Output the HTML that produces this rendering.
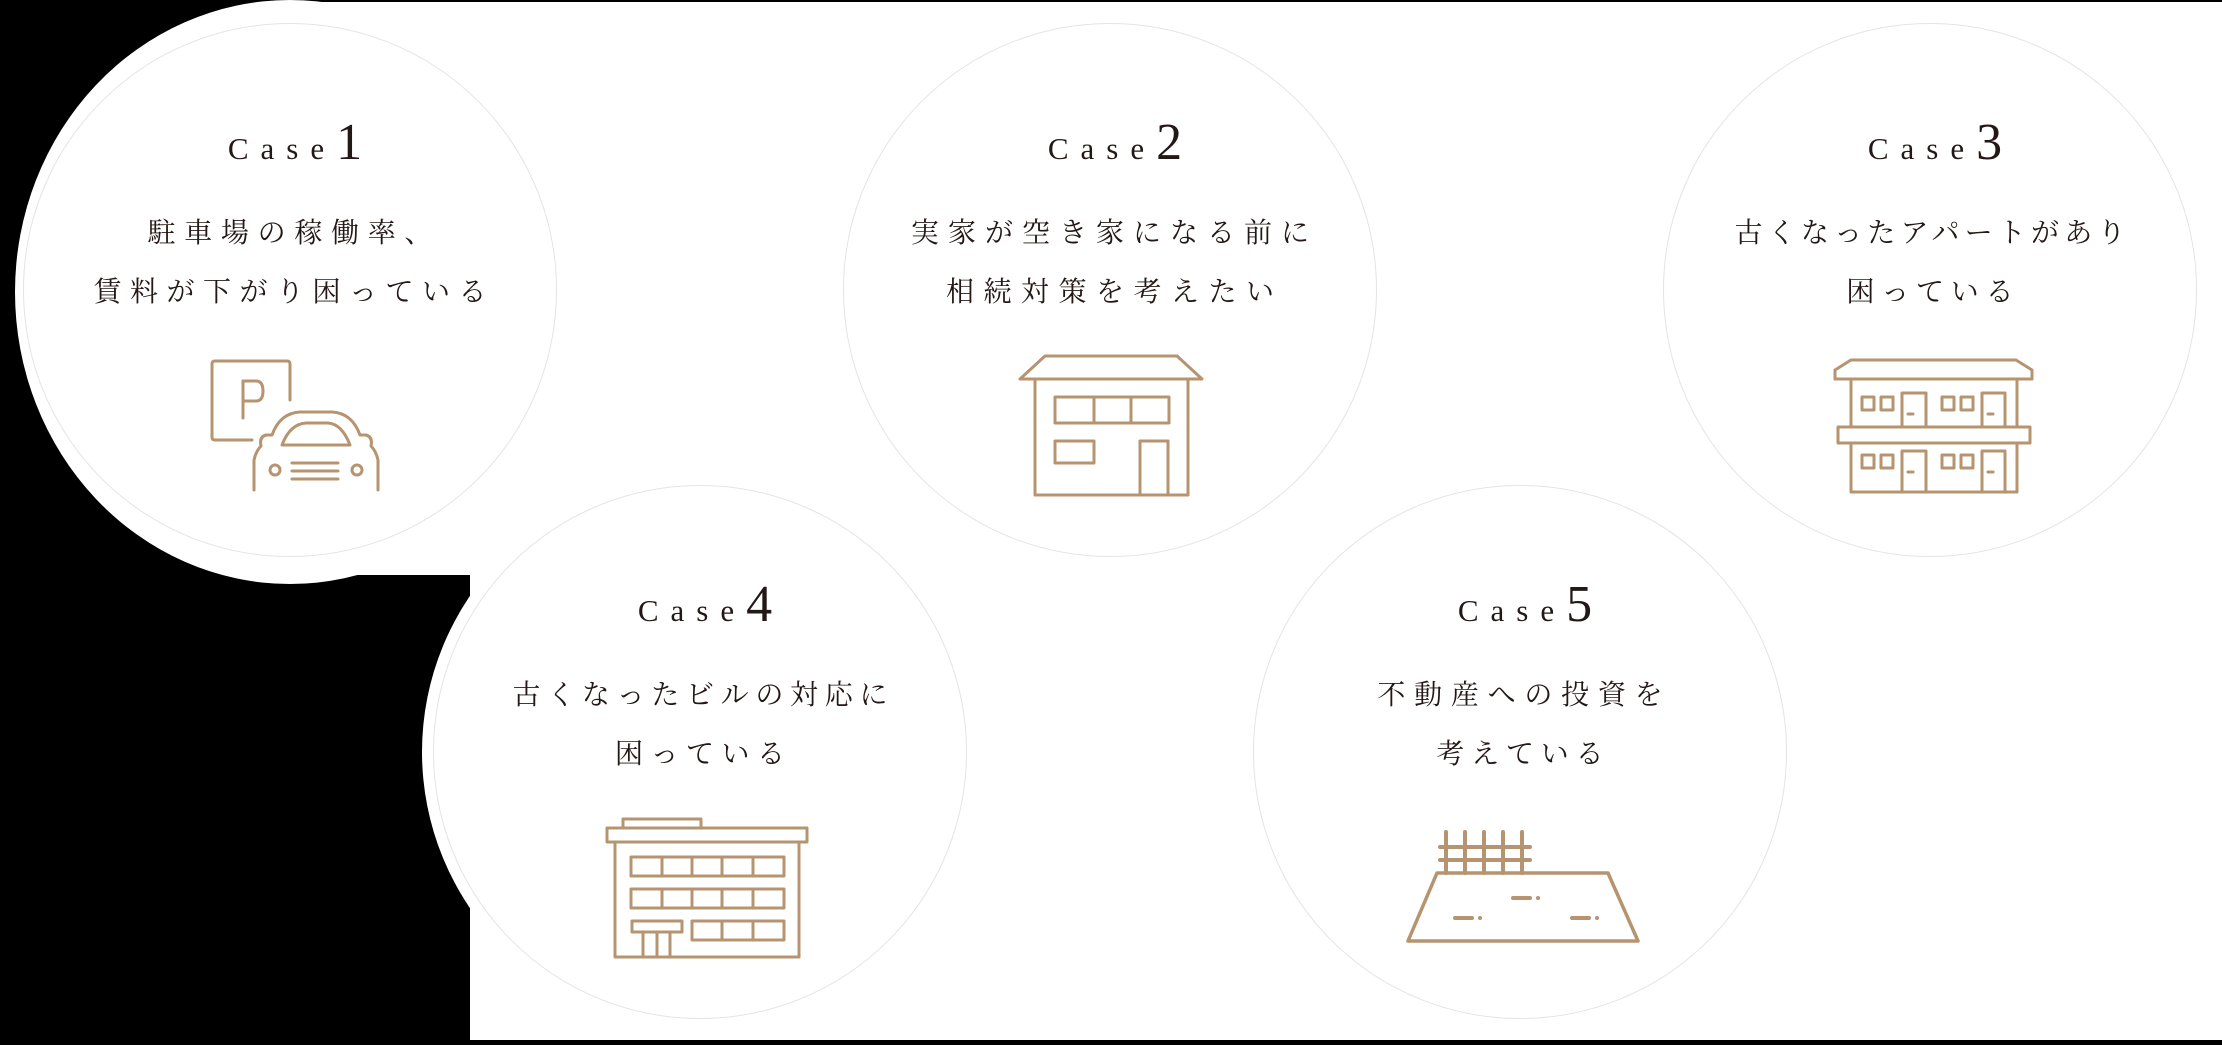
<!DOCTYPE html>
<html><head><meta charset="utf-8">
<style>
html,body{margin:0;padding:0;background:#000;}
#w{position:relative;width:2222px;height:1045px;overflow:hidden;background:#000;}
.wr{position:absolute;background:#fff;}
.halo{position:absolute;background:#fff;border-radius:50%;}
.c{position:absolute;width:534px;height:534px;border-radius:50%;background:#fff;border:1px solid #e4e4e4;box-sizing:border-box;}
.t{position:absolute;width:600px;text-align:center;color:#231815;white-space:nowrap;}
.case{font-family:"Liberation Serif",serif;font-size:31px;letter-spacing:12px;line-height:60px;height:60px;}
.case b{font-weight:normal;font-size:52px;letter-spacing:0;}
.jp{font-family:"Noto Serif CJK JP","Noto Serif CJK SC",serif;font-size:28px;line-height:34px;}
svg{position:absolute;overflow:visible;}
svg *{fill:none;stroke:#b69470;stroke-width:3;stroke-linejoin:round;stroke-linecap:round;}
</style></head><body>
<div id="w">
  <div class="wr" style="left:470px;top:2px;width:1752px;height:1038px;"></div>
  <div class="wr" style="left:290px;top:2px;width:190px;height:573px;"></div>
  <div class="halo" style="left:15px;top:0px;width:550px;height:584px;"></div>
  <div class="halo" style="left:422px;top:474px;width:556px;height:556px;"></div>

  <div class="c" style="left:23px;top:23px;"></div>
  <div class="c" style="left:843px;top:23px;"></div>
  <div class="c" style="left:1663px;top:23px;"></div>
  <div class="c" style="left:433px;top:485px;"></div>
  <div class="c" style="left:1253px;top:485px;"></div>

  <!-- Case 1 -->
  <div class="t case" style="left:-5px;top:113px;">Case<b>1</b></div>
  <div class="t jp" style="left:-10px;top:214px;letter-spacing:8.7px;text-indent:8.7px;">駐車場の稼働率、</div>
  <div class="t jp" style="left:-10px;top:273px;letter-spacing:8.5px;text-indent:8.5px;">賃料が下がり困っている</div>
  <svg style="left:200px;top:345px;" width="190" height="155" viewBox="0 0 190 155">
    <path d="M52,95 L15,95 Q12,95 12,92 L12,19 Q12,16 15,16 L87,16 Q90,16 90,19 L90,55"/>
    <path d="M43,73 L43,36 L56,36 Q63,36 63,46 Q63,56 56,56 L43,56"/>
    <path d="M54,145 L54,115 Q56,106 61,101 Q59,92 66,90 L72,90 Q80,68 100,67 L132,67 Q152,68 160,90 L166,90 Q173,92 171,101 Q176,106 178,115 L178,145"/>
    <path d="M82,100 Q90,79 106,78 L128,78 Q142,79 150,100 Z"/>
    <circle cx="75" cy="125" r="5"/><circle cx="157" cy="125" r="5"/>
    <path d="M92,118 L138,118 M92,126 L138,126 M92,134 L138,134"/>
  </svg>

  <!-- Case 2 -->
  <div class="t case" style="left:815px;top:113px;">Case<b>2</b></div>
  <div class="t jp" style="left:810px;top:214px;letter-spacing:9px;text-indent:9px;">実家が空き家になる前に</div>
  <div class="t jp" style="left:810px;top:273px;letter-spacing:9.5px;text-indent:9.5px;">相続対策を考えたい</div>
  <svg style="left:1005px;top:340px;" width="210" height="165" viewBox="0 0 210 165">
    <path d="M15,39 L40,16 L172,16 L197,39 Z"/>
    <path d="M30,40 L30,155 L183,155 L183,40"/>
    <rect x="50" y="57" width="114" height="26"/><path d="M89,57 L89,83 M126,57 L126,83"/>
    <rect x="50" y="101" width="39" height="22"/>
    <path d="M135,155 L135,101 L163,101 L163,155"/>
  </svg>

  <!-- Case 3 -->
  <div class="t case" style="left:1635px;top:113px;">Case<b>3</b></div>
  <div class="t jp" style="left:1630px;top:214px;letter-spacing:5.2px;text-indent:5.2px;">古くなったアパートがあり</div>
  <div class="t jp" style="left:1630px;top:273px;letter-spacing:6.8px;text-indent:6.8px;">困っている</div>
  <svg style="left:1820px;top:345px;" width="220" height="155" viewBox="0 0 220 155">
    <path d="M15,34 L15,25 L31,15 L196,15 L212,25 L212,34 Z"/>
    <path d="M31,34 L31,82 M197,34 L197,82"/>
    <rect x="18" y="82" width="192" height="16"/>
    <path d="M31,98 L31,147 L197,147 L197,98"/>
    <rect x="42" y="52" width="12" height="13"/><rect x="61" y="52" width="12" height="13"/>
    <path d="M82,82 L82,48 L106,48 L106,82 M88,69 L93,69"/>
    <rect x="122" y="52" width="12" height="13"/><rect x="141" y="52" width="12" height="13"/>
    <path d="M162,82 L162,48 L185,48 L185,82 M168,69 L173,69"/>
    <rect x="42" y="110" width="12" height="13"/><rect x="61" y="110" width="12" height="13"/>
    <path d="M82,147 L82,106 L106,106 L106,147 M88,127 L93,127"/>
    <rect x="122" y="110" width="12" height="13"/><rect x="141" y="110" width="12" height="13"/>
    <path d="M162,147 L162,106 L185,106 L185,147 M168,127 L173,127"/>
  </svg>

  <!-- Case 4 -->
  <div class="t case" style="left:405px;top:575px;">Case<b>4</b></div>
  <div class="t jp" style="left:400px;top:676px;letter-spacing:6.7px;text-indent:6.7px;">古くなったビルの対応に</div>
  <div class="t jp" style="left:400px;top:735px;letter-spacing:7.5px;text-indent:7.5px;">困っている</div>
  <svg style="left:595px;top:805px;" width="220" height="165" viewBox="0 0 220 165">
    <path d="M28,23 L28,14 L106,14 L106,23"/>
    <rect x="12" y="23" width="200" height="14"/>
    <path d="M20,37 L20,152 L204,152 L204,37"/>
    <rect x="36" y="52" width="153" height="19"/><path d="M67,52 L67,71 M97,52 L97,71 M127,52 L127,71 M158,52 L158,71"/>
    <rect x="36" y="84" width="153" height="19"/><path d="M67,84 L67,103 M97,84 L97,103 M127,84 L127,103 M158,84 L158,103"/>
    <rect x="37" y="116" width="50" height="11"/>
    <path d="M48,127 L48,152 M62,127 L62,152 M75,127 L75,152"/>
    <rect x="97" y="116" width="92" height="19"/><path d="M127,116 L127,135 M158,116 L158,135"/>
  </svg>

  <!-- Case 5 -->
  <div class="t case" style="left:1225px;top:575px;">Case<b>5</b></div>
  <div class="t jp" style="left:1220px;top:676px;letter-spacing:8.75px;text-indent:8.75px;">不動産への投資を</div>
  <div class="t jp" style="left:1220px;top:735px;letter-spacing:6.8px;text-indent:6.8px;">考えている</div>
  <svg style="left:1395px;top:815px;" width="255" height="145" viewBox="0 0 255 145">
    <path d="M51,17 L51,58 M70,17 L70,58 M89,17 L89,58 M108,17 L108,58 M127,17 L127,58" style="stroke-width:4"/>
    <path d="M45,32 L135,32 M45,45 L135,45" style="stroke-width:4"/>
    <path d="M42,58 L213,58 L243,126 L13,126 Z" style="stroke-width:3.5"/>
    <path d="M118,83 L135,83 M143,83 L143,83 M60,103 L77,103 M85,103 L85,103 M177,103 L194,103 M202,103 L202,103" style="stroke-width:4"/>
  </svg>
</div>
</body></html>
